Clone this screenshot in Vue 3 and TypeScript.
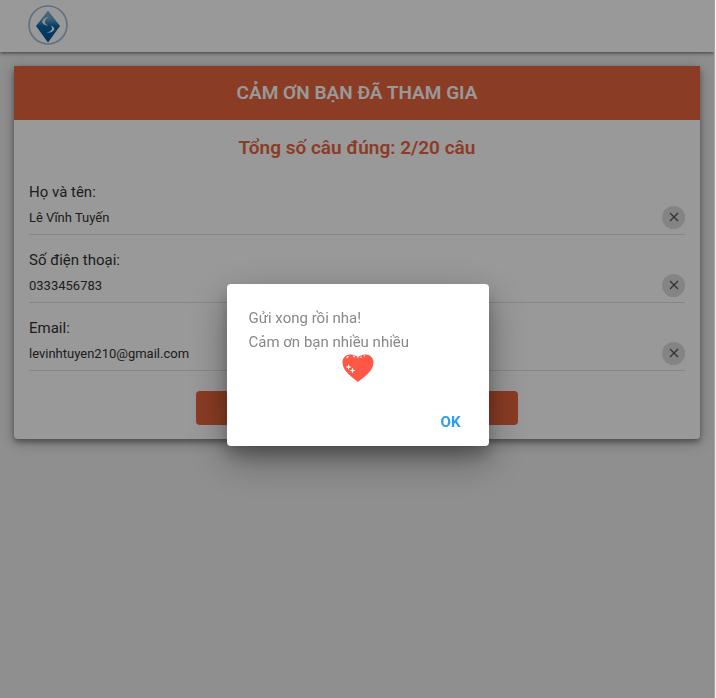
<script setup lang="ts">
import { ref } from 'vue'

interface Field {
  id: string
  label: string
  type: string
  value: string
}

const fields = ref<Field[]>([
  { id: 'name', label: 'Họ và tên:', type: 'text', value: 'Lê Vĩnh Tuyến' },
  { id: 'phone', label: 'Số điện thoại:', type: 'tel', value: '0333456783' },
  { id: 'email', label: 'Email:', type: 'email', value: 'levinhtuyen210@gmail.com' },
])
const correct = ref(2)
const total = ref(20)
const dialogOpen = ref(true)
</script>

<template>
  <div class="page">
    <header class="bar">
      <a class="brand" href="#" aria-label="Trang chủ">
        <svg viewBox="0 0 40 40" width="40" height="40" aria-hidden="true">
          <defs>
            <linearGradient id="gem" x1="0" y1="0" x2="0" y2="1">
              <stop offset="0" stop-color="#8fb2cf" />
              <stop offset="0.3" stop-color="#6099c6" />
              <stop offset="0.48" stop-color="#0d66a8" />
              <stop offset="1" stop-color="#00559c" />
            </linearGradient>
          </defs>
          <circle cx="20" cy="20" r="19" fill="none" stroke="#a4bed5" stroke-width="1.7" />
          <path d="M20 5.5 32 21 20 37.500 8 21Z" fill="url(#gem)" />
          <path d="M22 11.500C16 12.500 13.500 15.500 14.500 18 15.500 20 18.500 20.500 20.500 21 18 19.500 16.500 18 17 16 17.500 14 19.500 12.500 22 11.500Z" fill="#e4eef6" />
          <path d="M22.500 20.500C25.500 21.500 27 23 26 25 25 27 21.500 28 18.500 27.500 21.500 27 23.500 25.500 24 24 24.300 22.500 23.500 21.300 22.500 20.500Z" fill="#f4f8fb" />
        </svg>
      </a>
    </header>

    <main class="content">
      <form class="card" @submit.prevent="dialogOpen = true">
        <h1 class="title">CẢM ƠN BẠN ĐÃ THAM GIA</h1>
        <div class="body">
          <h2 class="score">Tổng số câu đúng: {{ correct }}/{{ total }} câu</h2>
          <div v-for="field in fields" :key="field.id" class="field">
            <label :for="field.id">{{ field.label }}</label>
            <div class="entry">
              <input :id="field.id" v-model="field.value" :type="field.type" />
              <button class="clear" type="button" :aria-label="`Xóa ${field.label}`" @click="field.value = ''">
                <svg viewBox="0 0 10 10" width="10" height="10" aria-hidden="true">
                  <path d="M1 1 9 9M9 1 1 9" stroke="#555" stroke-width="1.3" fill="none" />
                </svg>
              </button>
            </div>
          </div>
          <button class="submit" type="submit">Gửi</button>
        </div>
      </form>
    </main>

    <div v-if="dialogOpen" class="overlay">
      <section class="dialog" role="alertdialog" aria-modal="true" aria-describedby="message">
        <div id="message" class="message">
          <p>Gửi xong rồi nha!</p>
          <p>Cảm ơn bạn nhiều nhiều</p>
          <svg class="heart" viewBox="0 0 32 28" width="32" height="28" aria-hidden="true">
            <path d="M16 28C12 24.500 1 18 .5 9 .3 3.500 4 .5 8.500 .5 12 .5 14.500 2 16 3 17.500 2 20 .5 23.500 .5 28 .5 31.700 3.500 31.500 9 31 18 20 24.500 16 28Z" fill="#ff5745" />
            <g fill="#fff">
              <path d="M6.500 10 7.300 12.200 9.500 13 7.300 13.800 6.500 16 5.700 13.800 3.500 13 5.700 12.200ZM10.500 13.500 11.300 15.700 13.500 16.500 11.300 17.300 10.500 19.500 9.700 17.300 7.500 16.500 9.700 15.700Z" />
              <path d="M4 4.500 5.500 2 7 2.500 5.500 4ZM11 1.500 12.500 1.500 13 3.500 11.500 3ZM15 2.500 16.500 3 16 4.500ZM18 3.500 19.500 2 19.500 4ZM21.500 1.500 23 1.500 22 3Z" />
            </g>
          </svg>
        </div>
        <div class="actions">
          <button class="ok" type="button" @click="dialogOpen = false">OK</button>
        </div>
      </section>
    </div>
    <div class="rail" aria-hidden="true"></div>
  </div>
</template>

<style>
body {
  background: #eee;
}
</style>

<style scoped>
* {
  box-sizing: border-box;
}

.page {
  min-height: 100vh;
  padding-right: 2px;
  background: #eee;
  color: #333;
  font-family: Roboto, "Noto Sans", sans-serif;
}

button,
input {
  font-family: inherit;
}

.bar {
  display: flex;
  height: 52px;
  padding: 5px 28px;
  background: #fff;
  box-shadow: 0 1px 4px rgba(0, 0, 0, 0.6);
}

.brand {
  display: block;
  height: 40px;
}

.content {
  padding: 14px;
}

.card {
  background: #fff;
  border-radius: 4px;
  box-shadow: 0 3px 5px rgba(0, 0, 0, 0.3), 0 3px 14px rgba(0, 0, 0, 0.3);
}

.title {
  margin: 0;
  background: #e8643c;
  color: #fff;
  font-size: 19px;
  font-weight: 600;
  line-height: 54px;
  text-align: center;
}

.body {
  display: flex;
  flex-direction: column;
  padding: 14px 15px;
}

.score {
  margin: 0 0 18px;
  color: #e8643c;
  font-size: 19px;
  font-weight: 600;
  line-height: 28px;
  text-align: center;
}

.field {
  margin-bottom: 13px;
}

.field label {
  display: block;
  font-size: 15px;
  line-height: 24px;
}

.entry {
  display: flex;
  align-items: center;
  height: 31px;
  padding-bottom: 4px;
  border-bottom: 1px solid #e0e0e0;
}

.entry input {
  flex: 1;
  min-width: 0;
  padding: 2px 0 0;
  border: 0;
  outline: 0;
  background: transparent;
  color: inherit;
  font-size: 13px;
  line-height: 20px;
}

.clear {
  display: grid;
  place-items: center;
  width: 23px;
  height: 23px;
  padding: 0;
  border: 0;
  border-radius: 50%;
  background: #dcdcdc;
}

.submit {
  align-self: center;
  width: 49%;
  height: 34px;
  margin-top: 7px;
  border: 0;
  border-radius: 4px;
  background: #e8643c;
  color: #fff;
  font-size: 15px;
}

.overlay {
  position: fixed;
  inset: 0 1px 0 0;
  display: grid;
  place-items: center;
  padding-top: 32px;
  background: rgba(0, 0, 0, 0.4);
}

.dialog {
  width: 262px;
  background: #fff;
  border-radius: 4px;
  box-shadow: 0 11px 15px rgba(0, 0, 0, 0.2), 0 14px 40px rgba(0, 0, 0, 0.35);
}

.message {
  padding: 22px 22px 24px;
  color: #888;
  font-size: 15px;
  line-height: 24px;
}

.message p {
  margin: 0;
}

.heart {
  display: block;
  margin: 0 auto;
}

.actions {
  display: flex;
  justify-content: flex-end;
  padding: 0 20px 8px;
}

.ok {
  padding: 0 8px;
  border: 0;
  background: transparent;
  color: #2e9df4;
  font-size: 15px;
  font-weight: 700;
  line-height: 32px;
}

.rail {
  position: fixed;
  inset: 0 0 0 auto;
  width: 2px;
  border-left: 1px solid #a4a4a4;
  background: #f0f0f0;
}
</style>
